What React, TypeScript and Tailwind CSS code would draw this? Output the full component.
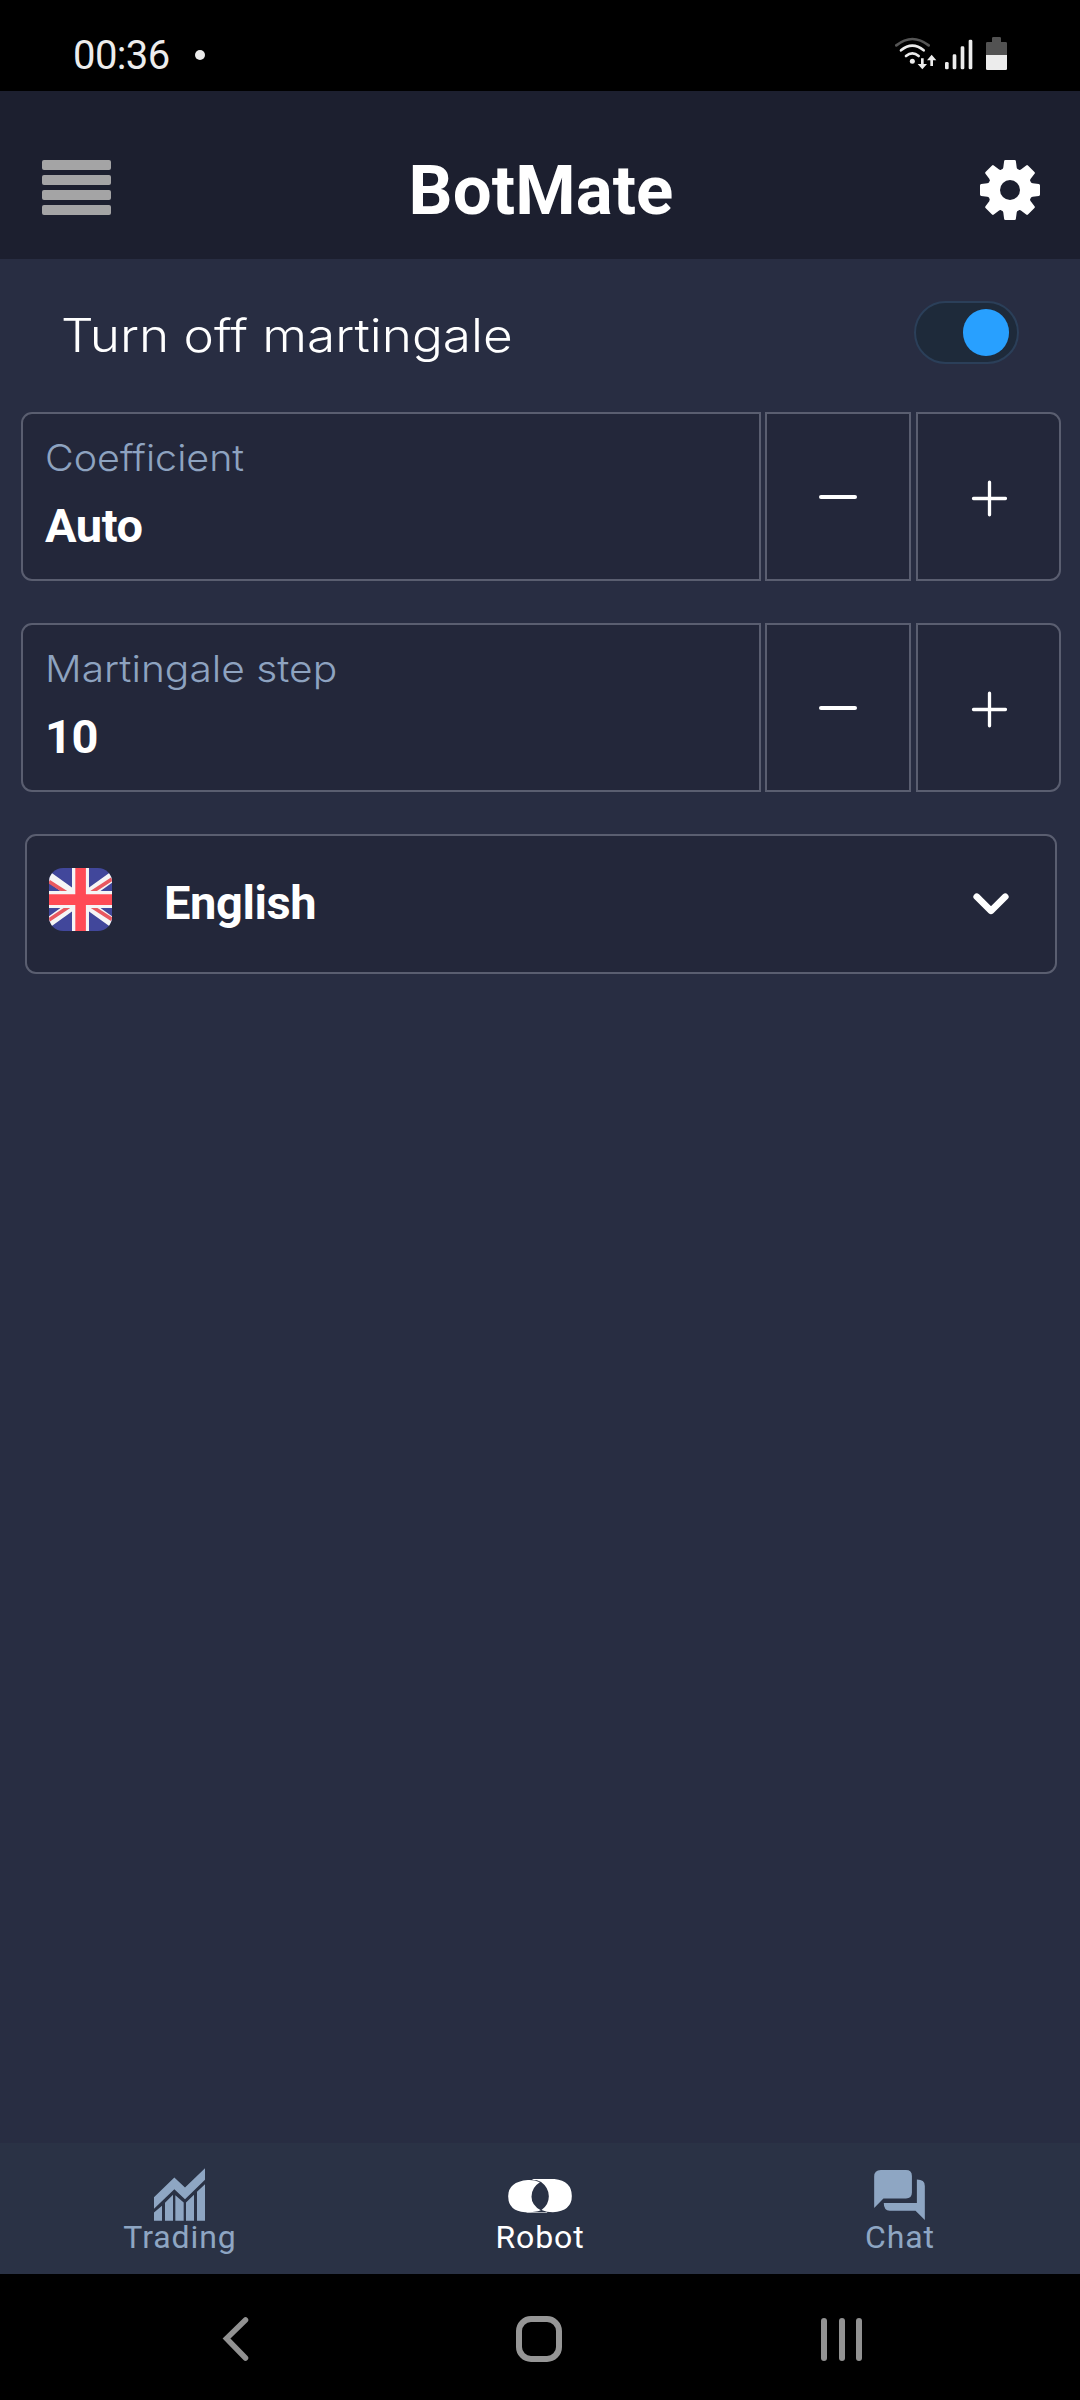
import { useState } from 'react';
import type { ReactNode } from 'react';

/** Clock, notification dot and system indicators */
function StatusBar() {
  return (
    <div className="flex h-[91px] items-start justify-between bg-black pr-[73px] pl-[73px] text-[#ececec]">
      <div className="flex items-center gap-[25px] pt-[36px]">
        <span className="text-[40px] leading-none tracking-[-0.6px]">00:36</span>
        <span className="mb-[3px] size-[10px] rounded-full bg-[#ececec]" />
      </div>
      <svg viewBox="105 111 336 99" className="mt-[37px] h-[33px] w-[112px]" fill="none" strokeLinecap="round">
        {/* wifi */}
        <path d="M109 136Q157 98 206 136" stroke="#555" strokeWidth="8" />
        <path d="M123 151Q157 123 191 151" stroke="#ececec" strokeWidth="8" />
        <path d="M138 168Q157 152 176 168" stroke="#ececec" strokeWidth="8" />
        <circle cx="157" cy="184" r="7.5" fill="#ececec" />
        <path d="M183 175h8v17h10l-14 16-14-16h10zM211 198h8v-17h10l-14-17-14 17h10z" fill="#ececec" />
        {/* signal */}
        <g fill="#ececec">
          <rect x="255" y="186" width="11" height="22" rx="4" />
          <rect x="278" y="163" width="11" height="45" rx="4" />
          <rect x="302" y="139" width="11" height="69" rx="4" />
          <rect x="326" y="119" width="11" height="89" rx="4" />
        </g>
        {/* battery */}
        <path d="M396 126v-11q0-4 4-4h19q4 0 4 4v11h14q4 0 4 4v35h-63v-35q0-4 4-4z" fill="#525252" />
        <path d="M378 165h63v41q0 4-4 4h-55q-4 0-4-4z" fill="#ececec" />
      </svg>
    </div>
  );
}

function GearIcon() {
  return (
    <svg viewBox="0 0 60 60" className="size-[60px]">
      <g fill="#fff">
        {[0, 45, 90, 135, 180, 225, 270, 315].map((angle) => (
          <path
            key={angle}
            d="M25.4 0h9.2q1.2 0 1.3 1.2l.8 6.2q.2 2 2.8 2.8L30 30 20.5 10.2q2.6-.8 2.8-2.8l.8-6.2Q24.2 0 25.4 0z"
            transform={`rotate(${angle} 30 30)`}
          />
        ))}
        <circle cx="30" cy="30" r="21.8" />
      </g>
      <circle cx="30" cy="30" r="10" fill="#1c1f2f" />
    </svg>
  );
}

function Header() {
  return (
    <header className="flex h-[168px] items-start justify-between bg-[#1c1f2f] pr-[40px] pl-[42px]">
      <button className="mt-[69px] flex w-[69px] flex-col gap-[5px]">
        <span className="h-[10px] w-full rounded-[2px] bg-[#a4a4a5]" />
        <span className="h-[10px] w-full rounded-[2px] bg-[#a4a4a5]" />
        <span className="h-[10px] w-full rounded-[2px] bg-[#a4a4a5]" />
        <span className="h-[10px] w-full rounded-[2px] bg-[#a4a4a5]" />
      </button>
      <h1 className="mt-[65px] mr-[9px] text-[69px] leading-none font-bold tracking-[0.1px] text-white">BotMate</h1>
      <button className="mt-[69px]">
        <GearIcon />
      </button>
    </header>
  );
}

interface StepperProps {
  /** Field caption */
  label: string;
  /** Current value */
  value: string;
  /** Caption stretch */
  labelClass: string;
}

/** Value box with minus and plus buttons */
function Stepper({ label, value, labelClass }: StepperProps) {
  return (
    <div className="flex h-[169px]">
      <div className="w-[740px] rounded-l-[11px] border-2 border-[#5a5e70] bg-[#23273a] pt-[25px] pl-[22px]">
        <p className={`w-max origin-left font-['Inter'] text-[37px] leading-none font-light text-[#8ea3c0] ${labelClass}`}>{label}</p>
        <p className="mt-[26px] text-[47px] leading-none font-bold tracking-[-0.5px] text-white">{value}</p>
      </div>
      <button className="ml-[4px] flex w-[146px] justify-center border-2 border-[#5a5e70] bg-[#23273a] pt-[81px]">
        <span className="h-[4px] w-[38px] rounded-full bg-white" />
      </button>
      <button className="ml-[5px] flex w-[145px] justify-center rounded-r-[11px] border-2 border-[#5a5e70] bg-[#23273a] pt-[66px]">
        <svg viewBox="0 0 36 37" className="h-[37px] w-[36px]" stroke="#fff" strokeWidth="3.3" strokeLinecap="round">
          <path d="M18.5 2.2v32.6M2.5 18.5h32" />
        </svg>
      </button>
    </div>
  );
}

function FlagIcon() {
  return (
    <svg viewBox="0 0 63 63" className="size-[63px] rounded-[14px]">
      <path d="M0 0h63v63H0z" fill="#41479b" />
      <path d="M-4 6L67 57M-4 57L67 6" stroke="#f5f5f5" strokeWidth="9.5" />
      <path d="M0 13.5L18 25M0 52L24 36M63 11L40 26M63 51.5L42 38" stroke="#e8585f" strokeWidth="3.6" />
      <path d="M23 0h17v23h23v17H40v23H23V40H0V23h23z" fill="#f5f5f5" />
      <path d="M26.3 0h10.6v26.3H63v10.6H36.9V63H26.3V36.9H0V26.3h26.3z" fill="#ff4b55" />
    </svg>
  );
}

function LanguageSelect() {
  return (
    <button className="mx-[4px] flex h-[140px] items-start rounded-[11px] border-2 border-[#5a5e70] bg-[#23273a] pr-[46px] pl-[22px]">
      <span className="mt-[32px]">
        <FlagIcon />
      </span>
      <span className="mt-[43px] ml-[52px] text-[47px] leading-none font-bold tracking-[-0.4px] text-white">English</span>
      <svg viewBox="0 0 36 22" className="mt-[57px] ml-auto h-[22px] w-[36px]" fill="none">
        <path d="M3.7 3.7L18 17.8 32.3 3.7" stroke="#fff" strokeWidth="6.6" strokeLinecap="round" strokeLinejoin="round" />
      </svg>
    </button>
  );
}

function MartingaleToggle() {
  const [on, setOn] = useState(true);

  return (
    <div className="flex h-[153px] items-start justify-between pr-[42px] pl-[40px]">
      <span className="mt-[53px] origin-left scale-x-[1.115] font-['Inter'] text-[46px] leading-none font-light text-white">
        Turn off martingale
      </span>
      <button
        onClick={() => setOn(!on)}
        className={`mt-[42px] flex h-[63px] w-[105px] items-center rounded-full border-2 border-[#2b3f59] bg-[#1e2a3a] px-[8px] ${on ? 'justify-end' : 'justify-start'}`}
      >
        <span className="h-[47px] w-[46px] rounded-full bg-[#28a0ff]" />
      </button>
    </div>
  );
}

interface TabProps {
  /** Text below the icon */
  label: string;
  active?: boolean;
  children: ReactNode;
}

function Tab({ label, active = false, children }: TabProps) {
  return (
    <button className={`flex flex-1 flex-col items-center ${active ? 'text-white' : 'text-[#8ea6c3]'}`}>
      <span className="flex h-[78px] items-start">{children}</span>
      <span className="text-[32px] leading-none tracking-[0.9px]">{label}</span>
    </button>
  );
}

function TabBar() {
  return (
    <nav className="flex h-[131px] bg-[#2a3245]">
      <Tab label="Trading">
        <svg viewBox="222 204 153 158" className="mt-[25px] mr-[2px] h-[53px] w-[51px]" fill="currentColor">
          <path d="M222 291L283 232 315 262 375 204V239L315 297 283 267 222 326z" />
          <path d="M222 337L246 317V362H222zM255 308L279 284V362H255zM286 285L311 307V362H286zM318 307L342 284V362H318zM351 275L375 252V362H351z" />
        </svg>
      </Tab>
      <Tab label="Robot" active>
        <svg viewBox="203 236 191 102" className="mt-[36px] mr-[1px] h-[34px] w-[64px]" fill="currentColor">
          <path d="M262 239Q282 238 298 246Q273 262 273 289Q273 314 301 330Q286 336 254 336Q203 332 203 288Q203 244 262 239z" />
          <path d="M276 236H342Q394 242 394 287Q394 332 337 336Q318 336 303 329Q325 314 325 288Q325 262 302 245Q290 238 276 238z" />
          <path d="M258 335H320V338H258z" opacity=".6" />
        </svg>
      </Tab>
      <Tab label="Chat">
        <svg viewBox="282 210 153 151" className="mt-[27px] mr-[2px] h-[50px] w-[51px]" fill="currentColor">
          <path d="M302 210H378Q396 210 396 228V278Q396 296 378 296H310L282 325V230Q282 210 302 210z" />
          <path d="M411 239Q435 239 435 258V361L407 333H329Q311 333 311 310H411z" />
        </svg>
      </Tab>
    </nav>
  );
}

/** Android navigation buttons */
function SystemNav() {
  return (
    <div className="flex h-[126px] items-start bg-black pt-[42px] pl-[222px]">
      <svg viewBox="0 0 27 46" className="h-[46px] w-[27px]" fill="none">
        <path d="M23.5 4L4.5 22.5 23.5 42" stroke="#929292" strokeWidth="5.5" strokeLinecap="round" />
      </svg>
      <span className="ml-[267px] size-[46px] rounded-[15px] border-[6px] border-[#969696]" />
      <div className="mt-[2px] ml-[259px] flex gap-[11.5px]">
        <span className="h-[43px] w-[6px] rounded-full bg-[#929292]" />
        <span className="h-[43px] w-[6px] rounded-full bg-[#929292]" />
        <span className="h-[43px] w-[6px] rounded-full bg-[#929292]" />
      </div>
    </div>
  );
}

export default function App() {
  return (
    <div className="flex h-[2400px] w-[1080px] flex-col bg-[#282d42] font-['Roboto',sans-serif]">
      <StatusBar />
      <Header />
      <main className="flex flex-1 flex-col pr-[19px] pl-[21px]">
        <MartingaleToggle />
        <div className="flex flex-col gap-[42px]">
          <Stepper label="Coefficient" value="Auto" labelClass="scale-x-[1.065]" />
          <Stepper label="Martingale step" value="10" labelClass="scale-x-[1.1]" />
          <LanguageSelect />
        </div>
      </main>
      <TabBar />
      <SystemNav />
    </div>
  );
}
